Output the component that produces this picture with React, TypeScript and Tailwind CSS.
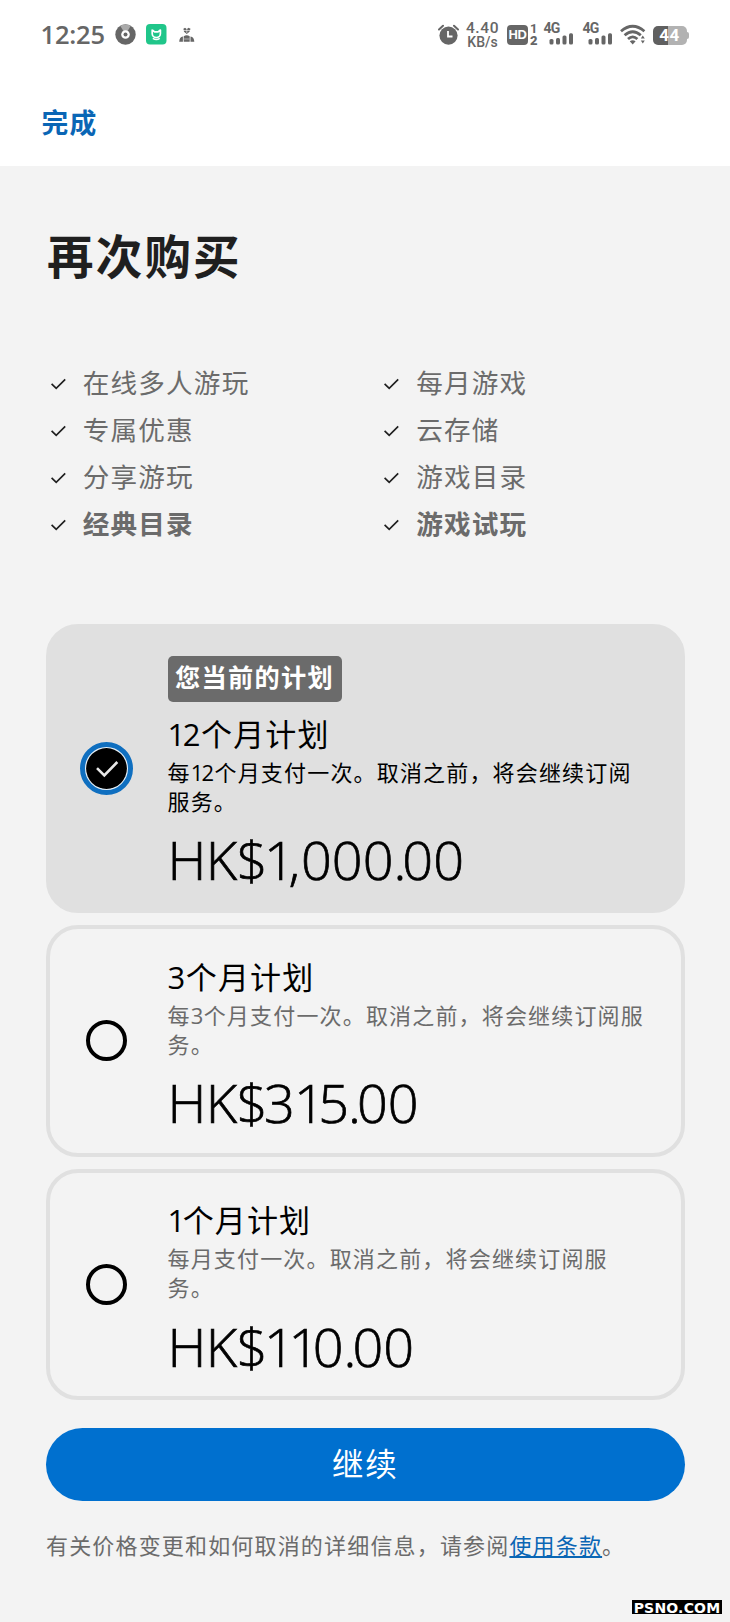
import React from "react";

const digitStyles = "font-['Open_Sans',sans-serif] leading-none";

/** Sets the digits of a Chinese phrase in the Latin face, with a narrow "1". */
function Mixed({ text }: { text: string }) {
  return (
    <>
      {text.split(/(1|[023456789]+)/).map((part, i) => {
        if (part === "1")
          return (
            <span key={i} className={`${digitStyles} tracking-[-0.08em]`}>
              1
            </span>
          );
        if (/^\d+$/.test(part))
          return (
            <span key={i} className={`${digitStyles} tracking-[0.02em]`}>
              {part}
            </span>
          );
        return part;
      })}
    </>
  );
}

const priceTracking: Record<string, string> = {
  HK: "tracking-[-0.5px]",
  $: "tracking-[-3.5px]",
  "1": "tracking-[-6.5px]",
  "3": "tracking-[-1px]",
  "5": "tracking-[-1px]",
  ",": "tracking-[1px]",
  ".": "tracking-[-4px]",
};

function Price({ text }: { text: string }) {
  return (
    <p className="h-[60px] whitespace-nowrap font-['Open_Sans',sans-serif] text-[54px] leading-[60px] font-light text-black [-webkit-text-stroke:0.7px_#000]">
      {text.split(/([$135,.])/).map((part, i) => (
        <span key={i} className={priceTracking[part]}>
          {part}
        </span>
      ))}
    </p>
  );
}

function Signal() {
  return (
    <div className="flex h-[22px] w-[32px] flex-col">
      <span className="h-[10px] font-[Roboto,sans-serif] text-[14px] leading-[10px] font-bold tracking-[-0.8px]">4G</span>
      <svg className="ml-[5px] h-[12px] w-[25px]" viewBox="0 0 25 12" fill="currentColor">
        <rect x="0.5" y="6" width="4" height="5.5" rx="1.5" />
        <rect x="7" y="5" width="4" height="6.5" rx="1.5" />
        <rect x="13.5" y="2.5" width="4" height="9" rx="1.5" />
        <rect x="20" y="0.3" width="4" height="11.2" rx="1.5" />
      </svg>
    </div>
  );
}

function StatusBar() {
  return (
    <div className="flex h-[69px] items-start pt-[23px] pl-[40.5px] text-[#666666]">
      <span className="w-[74.5px] font-['Open_Sans',sans-serif] text-[25.5px] leading-[22px] font-semibold tracking-[-0.2px] whitespace-nowrap">12:25</span>
      <svg className="mt-[1px] h-[21px] w-[21px]" viewBox="0 0 21 21">
        <circle cx="10.5" cy="10.5" r="10.2" fill="#666" />
        <path d="M10.5 10.5 5.2 1.8Q10.5-1 15.8 1.8Z" fill="#aaa" />
        <circle cx="10.5" cy="10.5" r="4.3" fill="#fff" />
        <circle cx="10.5" cy="10.5" r="2" fill="#666" />
      </svg>
      <svg className="mt-[1px] ml-[10px] h-[21px] w-[21px]" viewBox="0 0 21 21" fill="none">
        <rect width="20.5" height="20.5" rx="4" fill="#20c68a" />
        <path d="M6.2 5.6v4a4.1 4.1 0 0 0 8.2 0V6l-2.4 1.9H8.6L6.2 5.8" stroke="#fff" strokeWidth="1.7" strokeLinejoin="round" />
        <path d="M6.8 14.4q3.5 2.4 7 0" stroke="#fff" strokeWidth="1.4" />
      </svg>
      <svg className="mt-[4px] ml-[12px] h-[16px] w-[16px]" viewBox="0 0 16 16" fill="#666">
        <path d="M4.4 1.8 6 .8 7.8 2 9.5.8l2 1-1 3L7.8 7 5 4.8Z" />
        <path d="M4 3.5h7.5M7.8 1v5" stroke="#fff" strokeWidth=".6" />
        <path d="M.2 14.8q.2-5 3.7-5.4v5.4ZM4.7 9.2q3-2 6 0v5.6h-6ZM11.5 9.4q3.6.4 3.8 5.4h-3.8Z" />
        <path d="M5 12h5.5" stroke="#fff" strokeWidth=".5" />
      </svg>
      <svg className="mt-[1px] ml-[243px] h-[22px] w-[22px]" viewBox="0 0 22 22" fill="none">
        <circle cx="10.5" cy="11.6" r="9.1" fill="#666" />
        <path d="M1 5.5 5 1.8M16 1.8 20 5.5" stroke="#666" strokeWidth="2" strokeLinecap="round" />
        <path d="M10 7v5.5h4.5" stroke="#fff" strokeWidth="1.8" />
      </svg>
      <div className="ml-[5px] flex w-[35px] flex-col items-center font-[Roboto,sans-serif] font-medium whitespace-nowrap">
        <span className="text-[15.5px] leading-[11px] tracking-[0.6px]">4.40</span>
        <span className="mt-[2px] text-[14px] leading-[12px] tracking-[0px]">KB/s</span>
      </div>
      <div className="mt-[1.5px] ml-[7px] flex h-[20px] w-[21px] items-center justify-center rounded-[4px] bg-[#666]">
        <span className="font-['Liberation_Sans',sans-serif] text-[13px] leading-none font-bold tracking-[-0.5px] text-white">HD</span>
      </div>
      <div className="ml-[2px] flex w-[8px] flex-col font-[Roboto,sans-serif] text-[13px] leading-[11.5px] font-bold">
        <span>1</span>
        <span className="font-black">2</span>
      </div>
      <div className="ml-[5.5px]">
        <Signal />
      </div>
      <div className="ml-[7px]">
        <Signal />
      </div>
      <svg className="mt-[1px] ml-[5px] h-[22px] w-[26px]" viewBox="0 0 26 22" fill="none">
        <g stroke="#666" strokeWidth="2.8">
          <path d="M1 7.2Q12.7-2.6 24.4 7.2" />
          <path d="M4.6 11.2Q12.7 4.2 20.8 11.2" />
          <path d="M8 15Q12.7 10.8 17.4 15" />
        </g>
        <path d="M9.8 17.2q2.9-2 5.8 0l-2.9 3.2Z" fill="#666" />
        <path d="M22.8 11.6l2 3h-4ZM22.8 19.6l2-3h-4Z" fill="#666" />
      </svg>
      <div className="mt-[3px] ml-[7px] flex items-center">
        <div className="flex h-[19px] w-[34px] items-center justify-center rounded-[5px] bg-[linear-gradient(90deg,#606060_45%,#b2b2b2_45%)]">
          <span className="font-[Roboto,sans-serif] text-[17px] leading-none font-bold tracking-[0.4px] text-white">44</span>
        </div>
        <div className="h-[7px] w-[2px] rounded-r-[2px] bg-[#b2b2b2]" />
      </div>
    </div>
  );
}

function Feature({ label, bold }: { label: string; bold?: boolean }) {
  return (
    <li className="flex h-[47px] items-center">
      <svg className="mt-[2px] mr-[17px] h-[12px] w-[15px]" viewBox="0 0 15 12" fill="none" stroke="#1f1f1f" strokeWidth="1.7">
        <path d="M.6 5.8 5.2 10.4 14.2 1.3" />
      </svg>
      <span className={bold ? "mb-[2px] text-[26.6px] leading-[40px] font-bold tracking-[1.2px] text-[#6b6b6b]" : "mb-[2px] text-[26.6px] leading-[40px] tracking-[1.2px] text-[#6b6b6b]"}>
        {label}
      </span>
    </li>
  );
}

function Radio({ checked }: { checked?: boolean }) {
  if (!checked) return <div className="h-[41px] w-[41px] rounded-full border-4 border-black" />;
  return (
    <svg className="h-[53px] w-[53px]" viewBox="0 0 53 53" fill="none">
      <circle cx="26.5" cy="26.5" r="24" fill="#e8f1f8" stroke="#0f6fc0" strokeWidth="5" />
      <circle cx="26.5" cy="26.5" r="20.4" fill="#000" />
      <path d="M17 26.2 24.3 33.5 37.3 20" stroke="#e8e8e8" strokeWidth="2.6" />
    </svg>
  );
}

interface PlanData {
  name: string;
  note: string;
  price: string;
  current?: boolean;
}

function Plan({ name, note, price, current }: PlanData) {
  return (
    <div
      className={
        current
          ? "flex h-[289px] rounded-[32px] border-4 border-[#e0e0e0] bg-[#e0e0e0]"
          : "flex h-[231.5px] rounded-[32px] border-4 border-[#e0e0e0]"
      }
    >
      <div className="flex w-[117.5px] shrink-0 items-center justify-center pr-[4.4px]">
        <Radio checked={current} />
      </div>
      <div className={current ? "w-[482px] pt-[28px]" : "w-[482px] pt-[26.5px]"}>
        {current && (
          <div className="mb-[10.5px] flex h-[46px] w-[174px] items-center justify-center rounded-[5px] bg-[#6b6b6b] pb-[4px] text-[25.2px] font-bold tracking-[1.3px] whitespace-nowrap text-white">
            您当前的计划
          </div>
        )}
        <h2 className="h-[40px] text-[31px] leading-[40px] tracking-[1.1px] whitespace-nowrap text-black">
          <Mixed text={name} />
        </h2>
        <p className={current ? "mt-[4px] text-[22px] leading-[29px] tracking-[1.17px] text-black" : "mt-[4px] text-[22px] leading-[29px] tracking-[1.17px] text-[#6b6b6b]"}>
          <Mixed text={note} />
        </p>
        <div className="mt-[14.5px]">
          <Price text={price} />
        </div>
      </div>
    </div>
  );
}

const features = [
  { label: "在线多人游玩" },
  { label: "每月游戏" },
  { label: "专属优惠" },
  { label: "云存储" },
  { label: "分享游玩" },
  { label: "游戏目录" },
  { label: "经典目录", bold: true },
  { label: "游戏试玩", bold: true },
];

const plans: PlanData[] = [
  { name: "12个月计划", note: "每12个月支付一次。取消之前，将会继续订阅服务。", price: "HK$1,000.00", current: true },
  { name: "3个月计划", note: "每3个月支付一次。取消之前，将会继续订阅服务。", price: "HK$315.00" },
  { name: "1个月计划", note: "每月支付一次。取消之前，将会继续订阅服务。", price: "HK$110.00" },
];

export default function App() {
  return (
    <div lang="zh-CN" className="relative h-[1622px] w-[730px] overflow-hidden bg-[#f3f3f3] font-['Noto_Sans_CJK_SC',sans-serif]">
      <header className="h-[166px] bg-white">
        <StatusBar />
        <div className="flex h-[106px] items-center pl-[41.5px]">
          <button className="h-[40px] text-[26.8px] leading-[40px] font-bold tracking-[1.3px] text-[#0a66b5]">完成</button>
        </div>
      </header>
      <main className="pt-[58px] pr-[45.3px] pl-[46px]">
        <h1 className="h-[60px] pl-[1px] text-[46.5px] leading-[60px] font-bold tracking-[2.2px] text-[#1f1f1f]">再次购买</h1>
        <ul className="mt-[75px] grid grid-cols-[333.5px_1fr] pl-[4.7px]">
          {features.map((f) => (
            <Feature key={f.label} label={f.label} bold={f.bold} />
          ))}
        </ul>
        <section className="mt-[77px] flex flex-col gap-[12px]">
          {plans.map((p) => (
            <Plan key={p.price} {...p} />
          ))}
        </section>
        <button className="mt-[28px] flex h-[73px] w-full items-center justify-center rounded-full bg-[#0070cf] pb-[3px] text-[31.5px] tracking-[1.8px] text-white">
          继续
        </button>
        <p className="mt-[26.5px] text-[22px] leading-[32px] tracking-[1.17px] whitespace-nowrap text-[#6b6b6b]">
          有关价格变更和如何取消的详细信息，请参阅
          <a className="text-[#0a66b5] underline decoration-2 underline-offset-[2px]">使用条款</a>。
        </p>
      </main>
      <div className="absolute top-[1600px] left-[632px] flex h-[14px] w-[90px] items-center justify-center bg-black pt-[1px]">
        <span className="font-['DejaVu_Sans',sans-serif] text-[14px] leading-none font-bold tracking-[0.2px] whitespace-nowrap text-white">PSNO.COM</span>
      </div>
    </div>
  );
}
